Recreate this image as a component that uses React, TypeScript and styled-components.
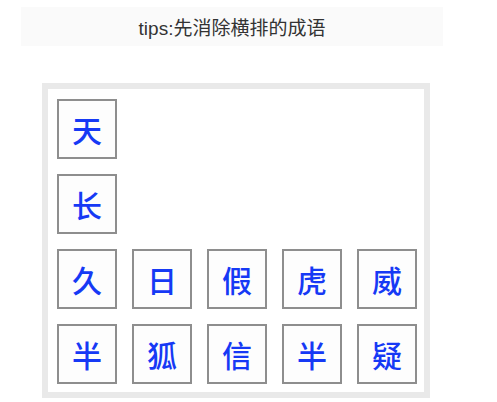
import * as React from 'react';
import styled, { createGlobalStyle } from 'styled-components';

const GlobalStyle = createGlobalStyle`
  html, body {
    margin: 0;
    padding: 0;
    background: #ffffff;
  }
  body {
    font-family: 'Liberation Sans', 'Noto Sans CJK SC', sans-serif;
  }
`;

const StyledPage = styled.div`
  width: 497px;
  height: 402px;
  padding-top: 7px;
  box-sizing: border-box;
`;

const StyledTips = styled.div`
  margin-left: 21px;
  width: 422px;
  height: 39px;
  background: #fafafa;
  display: flex;
  align-items: center;
  justify-content: center;
  color: #333333;
  font-size: 19px;
`;

const StyledBoard = styled.div`
  margin: 37px 0 0 42px;
  width: 388px;
  box-sizing: border-box;
  border: 6px solid #e9e9e9;
  padding: 10px 7px 8px 9px;
  display: flex;
  flex-direction: column;
  gap: 15px;
  background: #ffffff;
`;

const StyledRow = styled.div`
  display: flex;
  gap: 15px;
`;

const StyledTile = styled.div`
  width: 60px;
  height: 60px;
  box-sizing: border-box;
  border: 2px solid #8e8e8e;
  background: #fdfdfd;
  display: flex;
  align-items: center;
  justify-content: center;
  color: #1639f5;
  font-family: 'Noto Sans CJK SC', sans-serif;
  font-weight: 500;
  font-size: 30px;
  line-height: 1;
`;

// each row of the board, top to bottom
const rows: string[][] = [
  ['天'],
  ['长'],
  ['久', '日', '假', '虎', '威'],
  ['半', '狐', '信', '半', '疑'],
];

function App() {
  return (
    <StyledPage>
      <GlobalStyle />
      <StyledTips>tips:先消除横排的成语</StyledTips>
      <StyledBoard>
        {rows.map((row, i) => (
          <StyledRow key={i}>
            {row.map((ch, j) => (
              <StyledTile key={j}>{ch}</StyledTile>
            ))}
          </StyledRow>
        ))}
      </StyledBoard>
    </StyledPage>
  );
}

export default App;
